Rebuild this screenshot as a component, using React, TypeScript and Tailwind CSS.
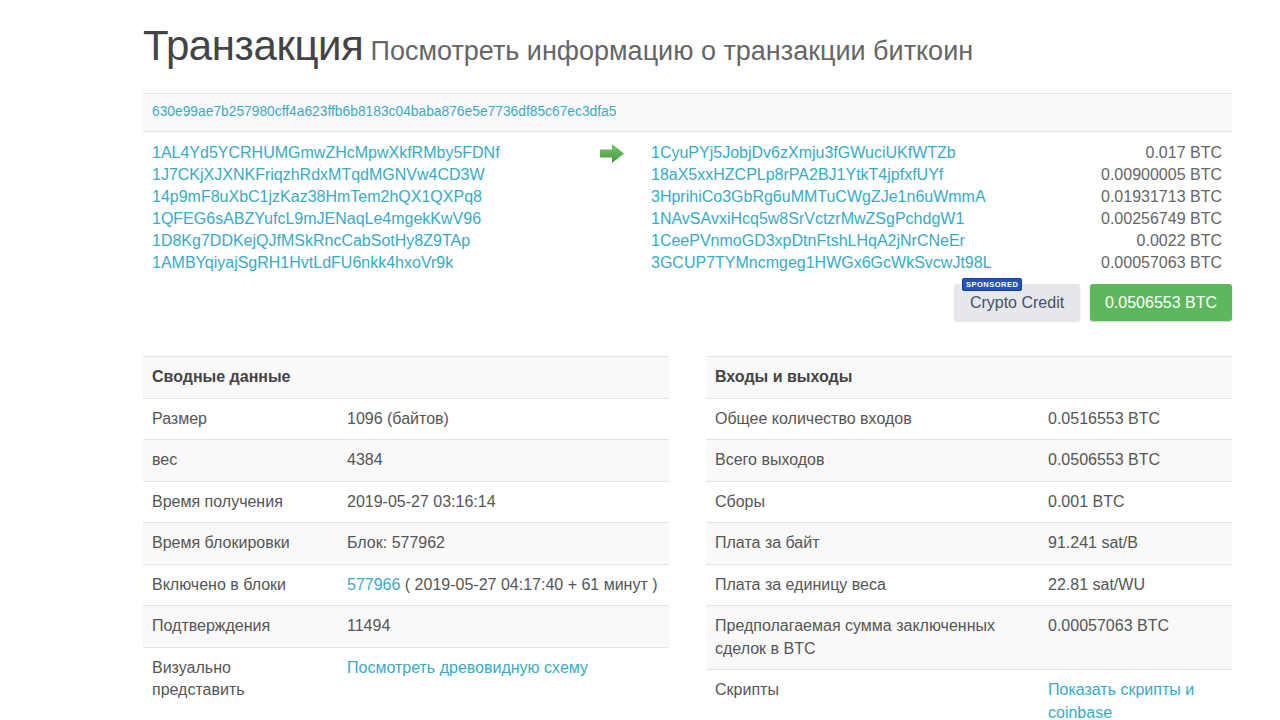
import React from 'react';

const inputs = [
  '1AL4Yd5YCRHUMGmwZHcMpwXkfRMby5FDNf',
  '1J7CKjXJXNKFriqzhRdxMTqdMGNVw4CD3W',
  '14p9mF8uXbC1jzKaz38HmTem2hQX1QXPq8',
  '1QFEG6sABZYufcL9mJENaqLe4mgekKwV96',
  '1D8Kg7DDKejQJfMSkRncCabSotHy8Z9TAp',
  '1AMBYqiyajSgRH1HvtLdFU6nkk4hxoVr9k'
];

const outputs = [
  { addr: '1CyuPYj5JobjDv6zXmju3fGWuciUKfWTZb', amount: '0.017 BTC' },
  { addr: '18aX5xxHZCPLp8rPA2BJ1YtkT4jpfxfUYf', amount: '0.00900005 BTC' },
  { addr: '3HprihiCo3GbRg6uMMTuCWgZJe1n6uWmmA', amount: '0.01931713 BTC' },
  { addr: '1NAvSAvxiHcq5w8SrVctzrMwZSgPchdgW1', amount: '0.00256749 BTC' },
  { addr: '1CeePVnmoGD3xpDtnFtshLHqA2jNrCNeEr', amount: '0.0022 BTC' },
  { addr: '3GCUP7TYMncmgeg1HWGx6GcWkSvcwJt98L', amount: '0.00057063 BTC' }
];

type Row = { label: React.ReactNode; value: React.ReactNode };

const summary: Row[] = [
  { label: 'Размер', value: '1096 (байтов)' },
  { label: 'вес', value: '4384' },
  { label: 'Время получения', value: '2019-05-27 03:16:14' },
  { label: 'Время блокировки', value: 'Блок: 577962' },
  {
    label: 'Включено в блоки',
    value: (
      <>
        <span className="text-[#38abc4]">577966</span> ( 2019-05-27 04:17:40 + 61 минут )
      </>
    )
  },
  { label: 'Подтверждения', value: '11494' },
  {
    label: (
      <>
        Визуально
        <br />
        представить
      </>
    ),
    value: <span className="text-[#38abc4]">Посмотреть древовидную схему</span>
  }
];

const io: Row[] = [
  { label: 'Общее количество входов', value: '0.0516553 BTC' },
  { label: 'Всего выходов', value: '0.0506553 BTC' },
  { label: 'Сборы', value: '0.001 BTC' },
  { label: 'Плата за байт', value: '91.241 sat/B' },
  { label: 'Плата за единицу веса', value: '22.81 sat/WU' },
  {
    label: (
      <>
        Предполагаемая сумма заключенных
        <br />
        сделок в BTC
      </>
    ),
    value: '0.00057063 BTC'
  },
  {
    label: 'Скрипты',
    value: (
      <span className="text-[#38abc4]">
        Показать скрипты и
        <br />
        coinbase
      </span>
    )
  }
];

function InfoTable({ title, rows, labelWidth }: { title: string; rows: Row[]; labelWidth: string }) {
  return (
    <div className="border-t border-[#e3e3e3]">
      <div className="bg-[#f9f9f9] px-[9px] py-[9px] leading-[22.5px] font-bold text-[#444]">{title}</div>
      {rows.map((r, i) => (
        <div
          key={i}
          className={`flex border-t border-[#e3e3e3] ${i % 2 === 1 ? 'bg-[#f9f9f9]' : 'bg-white'}`}
        >
          <div className={`${labelWidth} shrink-0 px-[9px] py-[9px] leading-[22.5px]`}>{r.label}</div>
          <div className="flex-1 px-[9px] py-[9px] leading-[22.5px]">{r.value}</div>
        </div>
      ))}
    </div>
  );
}

function Arrow() {
  return (
    <svg width="24" height="19" viewBox="0 0 24 19">
      <defs>
        <linearGradient id="ag" x1="0" y1="0" x2="0" y2="1">
          <stop offset="0" stopColor="#7cc46e" />
          <stop offset="1" stopColor="#3f9a3c" />
        </linearGradient>
      </defs>
      <path d="M0 5.5 H12 V0 L24 9.5 L12 19 V13.5 H0 Z" fill="url(#ag)" />
    </svg>
  );
}

export default function App() {
  return (
    <div
      className="min-h-[720px] bg-white text-[16px] text-[#555]"
      style={{ fontFamily: '"Liberation Sans", Arial, sans-serif' }}
    >
      <div className="pl-[143px] pt-[22px] w-[1232px]">
        <h1 className="flex items-baseline gap-[7px] leading-[48px]">
          <span className="text-[42px] tracking-[-0.4px] text-[#444]">Транзакция</span>
          <span className="text-[27px] text-[#666]">Посмотреть информацию о транзакции биткоин</span>
        </h1>

        <div className="mt-[18px] flex h-[39px] items-center border-y border-[#e3e3e3] bg-[#fafafa] px-[9px] text-[13.8px] text-[#38abc4]">
          630e99ae7b257980cff4a623ffb6b8183c04baba876e5e7736df85c67ec3dfa5
        </div>

        <div className="flex pt-[10px] leading-[22px] text-[#38abc4]">
          <div className="w-[448px] px-[9px]">
            {inputs.map((a) => (
              <div key={a}>{a}</div>
            ))}
          </div>
          <div className="w-[60px] pt-[2px] pl-[9px]">
            <Arrow />
          </div>
          <div className="flex-1">
            {outputs.map((o) => (
              <div key={o.addr} className="flex justify-between pr-[10px]">
                <span>{o.addr}</span>
                <span className="text-[#666]">{o.amount}</span>
              </div>
            ))}
            <div className="mt-[10px] flex justify-end gap-[10px]">
              <div className="relative flex h-[37px] w-[126px] items-center justify-center rounded-[3px] bg-[#e6e7ea] text-[16px] text-[#46506b] shadow-[0_1px_2px_rgba(0,0,0,0.12)]">
                Crypto Credit
                <span className="absolute left-[8px] top-[-6px] rounded-[2px] border border-[#143e9c] bg-[#2453b8] px-[3px] text-[7.5px] font-bold leading-[11px] tracking-[0.5px] text-white">
                  SPONSORED
                </span>
              </div>
              <div className="flex h-[37px] w-[142px] items-center justify-center rounded-[3px] bg-[#5cb85c] text-[16px] text-white shadow-[0_1px_2px_rgba(0,0,0,0.2)]">
                0.0506553 BTC
              </div>
            </div>
          </div>
        </div>

        <div className="mt-[35px] grid grid-cols-2 gap-[37px]">
          <InfoTable title="Сводные данные" rows={summary} labelWidth="w-[195px]" />
          <InfoTable title="Входы и выходы" rows={io} labelWidth="w-[333px]" />
        </div>
      </div>
    </div>
  );
}
